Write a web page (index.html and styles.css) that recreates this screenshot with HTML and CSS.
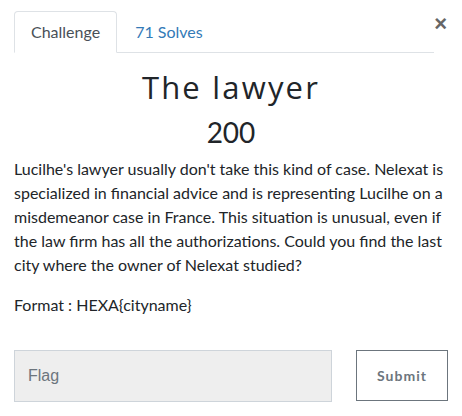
FILE: index.html
```html
<!DOCTYPE html>
<html>
<head>
<meta charset="utf-8">
<link rel="stylesheet" href="styles.css">
</head>
<body>
<div class="modal">
  <div class="top">
    <ul class="tabs">
      <li class="tab active">Challenge</li>
      <li class="tab link">71 Solves</li>
    </ul>
    <span class="close">&times;</span>
  </div>
  <h2 class="title">The lawyer</h2>
  <h3 class="value">200</h3>
  <p class="desc">Lucilhe's lawyer usually don't take this kind of case. Nelexat is specialized in financial advice and is representing Lucilhe on a misdemeanor case in France. This situation is unusual, even if the law firm has all the authorizations. Could you find the last city where the owner of Nelexat studied?</p>
  <p class="desc">Format : HEXA{cityname}</p>
  <div class="submit-row">
    <input class="flag" type="text" placeholder="Flag">
    <button class="submit">Submit</button>
  </div>
</div>
</body>
</html>
```
FILE: styles.css
```css
html, body { margin: 0; padding: 0; background: #fff; }
body { font-family: Lato, "Open Sans", sans-serif; color: #212529; }
.modal { padding: 11px 14px 0 14px; width: 434px; }
.top { display: flex; align-items: flex-start; }
.tabs { list-style: none; margin: 0; padding: 0; display: flex; width: 420px; border-bottom: 1px solid #dee2e6; }
.tab { font-size: 16px; line-height: 24px; padding: 8px 16px 8px 16px; margin-bottom: -1px; border: 1px solid transparent; border-radius: 4px 4px 0 0; }
.tab.active { color: #495057; border-color: #dee2e6 #dee2e6 #fff; background: #fff; }
.tab.link { color: #337ab7; padding-left: 17px; }
.close { font-family: "Liberation Sans", Arial, sans-serif; font-size: 22px; font-weight: bold; color: #666; line-height: 1; margin-left: auto; margin-top: 2px; margin-right: 1px; }
.title { font-family: "Open Sans", sans-serif; font-weight: 400; font-size: 31px; letter-spacing: 2.2px; text-align: center; margin: 14px 0 0 0; line-height: 40px; color: #212529; }
.value { font-weight: 400; font-size: 28px; text-align: center; margin: 7px 0 0 0; line-height: 36px; color: #212529; }
.desc { font-size: 16px; line-height: 24px; margin: 7px 0 0 0; }
.desc + .desc { margin-top: 16px; }
.submit-row { display: flex; justify-content: space-between; margin-top: 33px; }
.flag { box-sizing: border-box; width: 318px; height: 52px; background: #eee; border: 1px solid #ced4da; border-radius: 0; padding: 0 13px; font-family: "Liberation Sans", Arial, sans-serif; font-size: 16px; color: #495057; }
.flag::placeholder { color: #6c757d; }
.submit { box-sizing: border-box; width: 92px; height: 51px; background: #fff; border: 1px solid #6c757d; border-radius: 0; font-family: Lato, sans-serif; font-weight: 700; font-size: 14px; letter-spacing: 1px; color: #6c757d; padding: 0; }
```
